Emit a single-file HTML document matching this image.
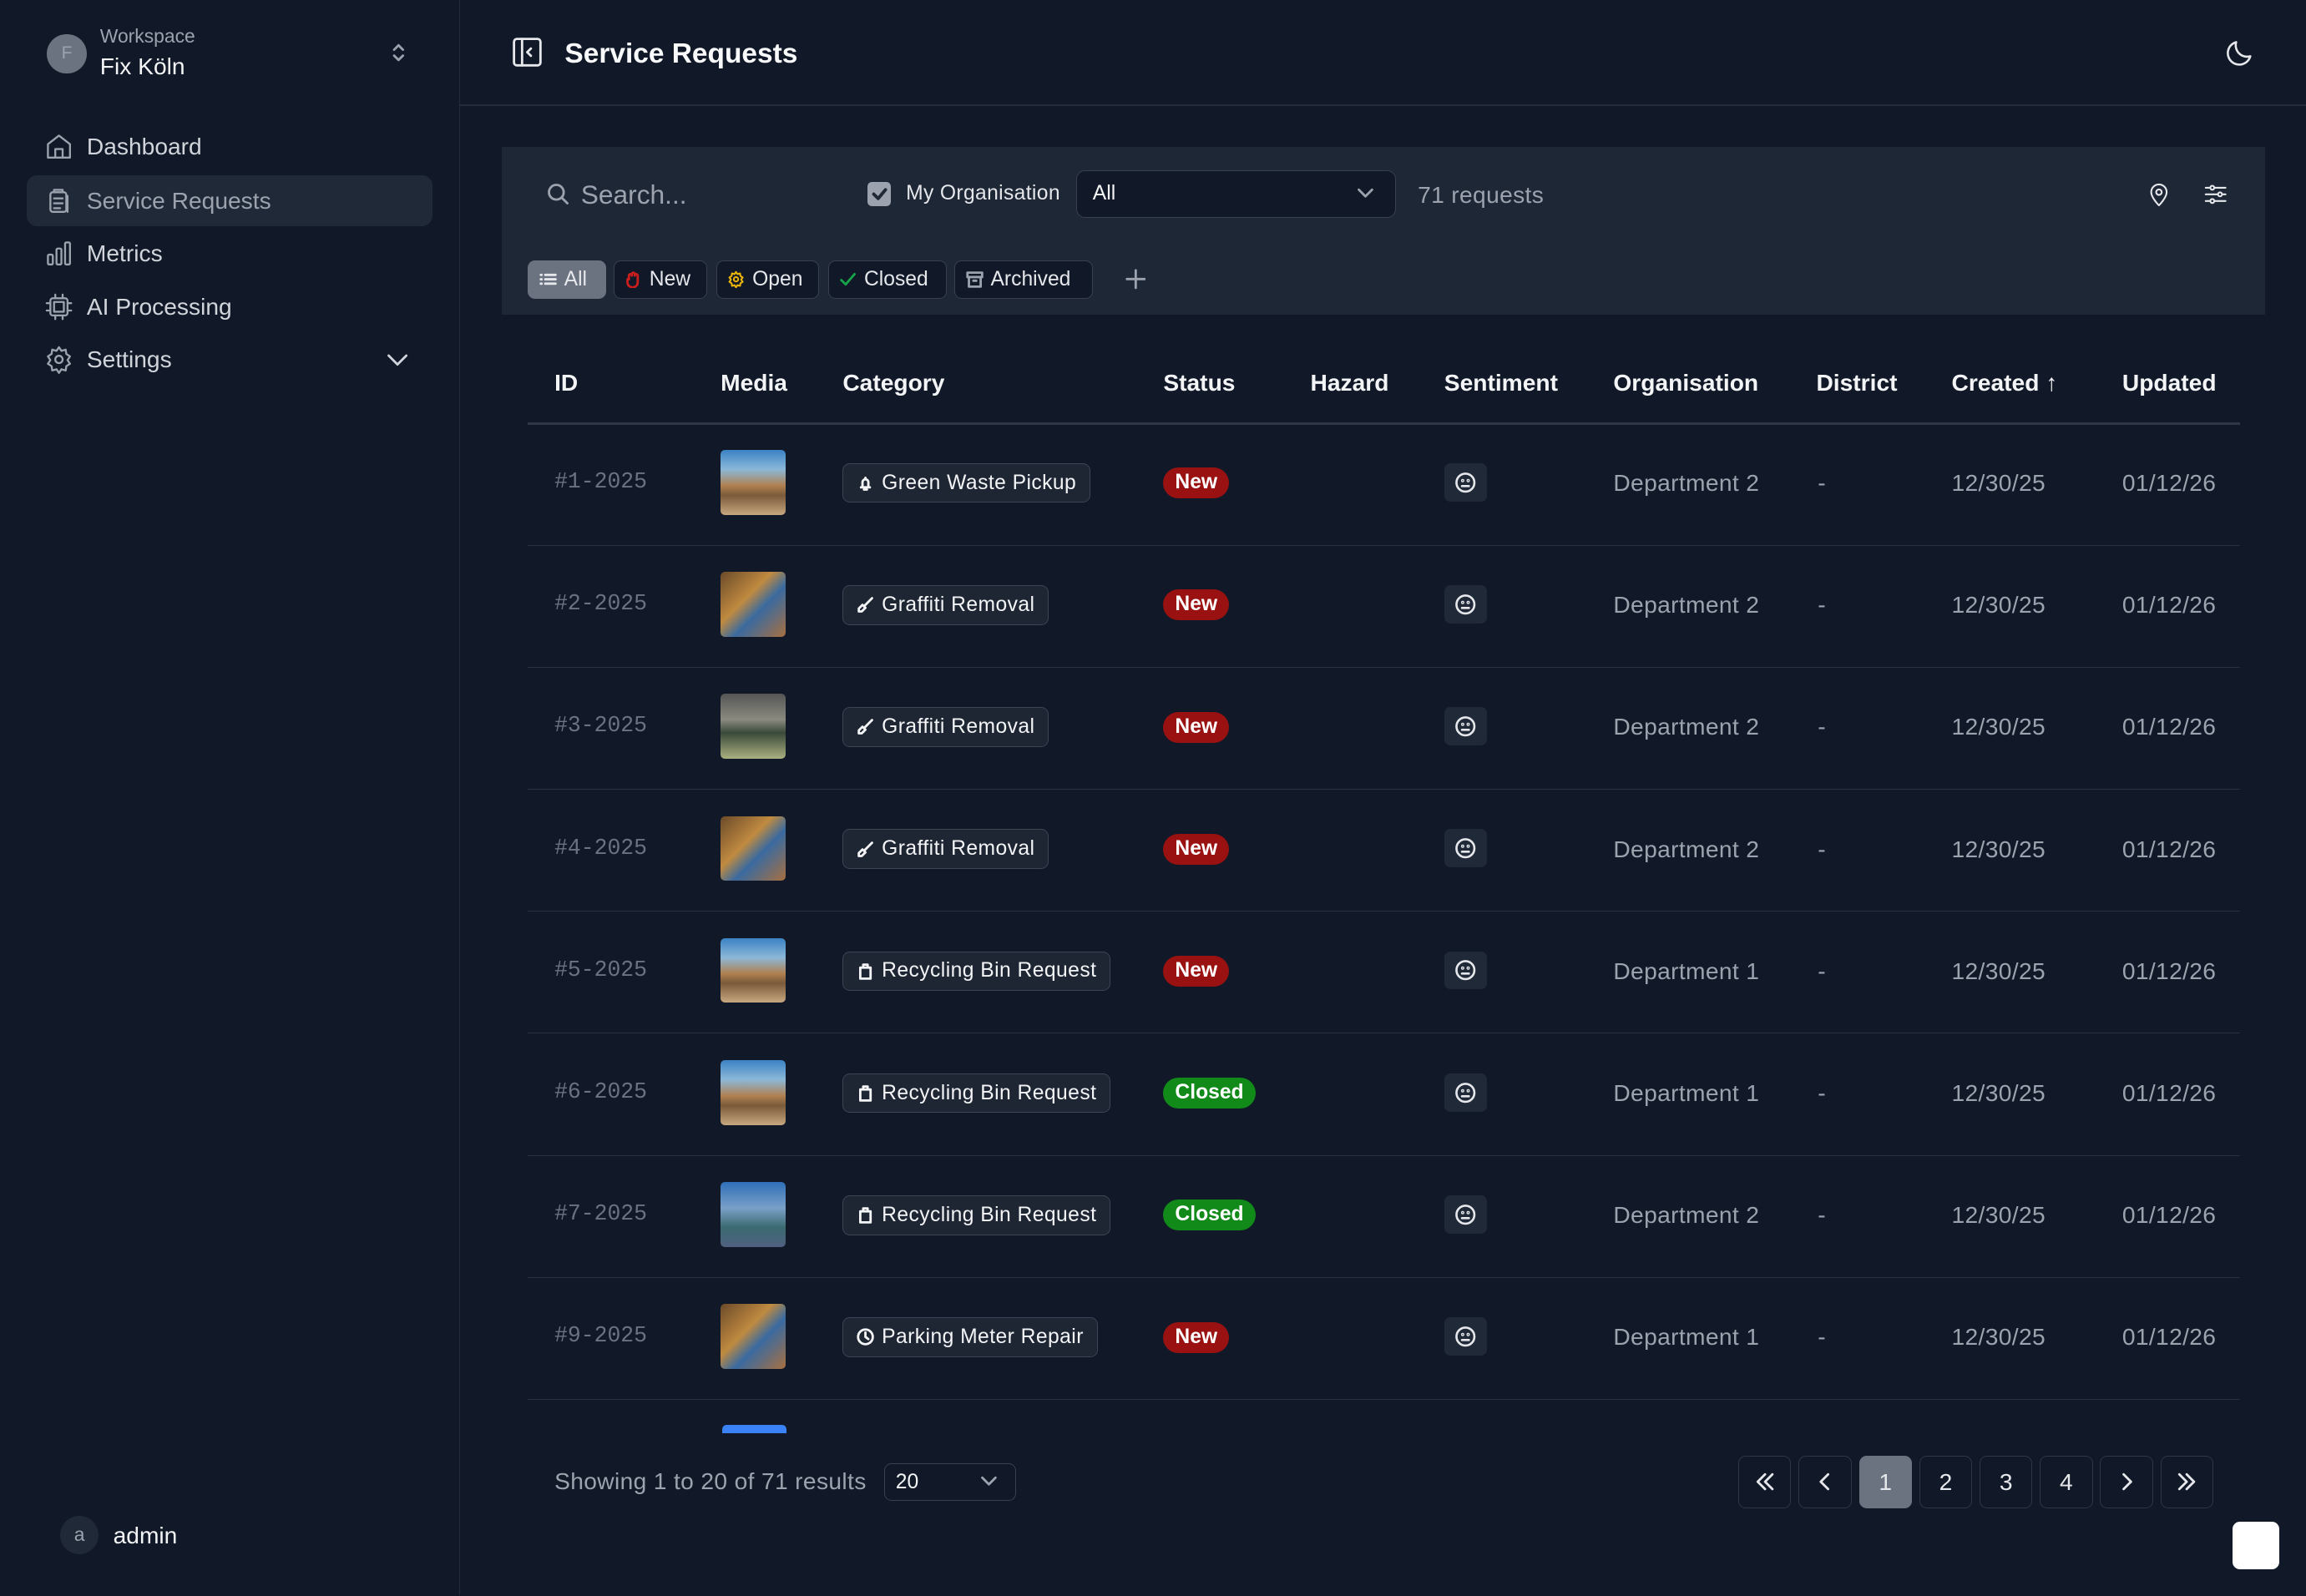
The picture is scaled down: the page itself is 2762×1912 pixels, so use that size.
<!DOCTYPE html>
<html><head><meta charset="utf-8"><style>
*{box-sizing:border-box;margin:0;padding:0}
html,body{width:2762px;height:1912px;overflow:hidden;background:#111827}
#w{zoom:1.7615;width:1568px;height:1085px;position:relative;font-family:"Liberation Sans",sans-serif;color:#e5e7eb;background:#111827}
.a{position:absolute}
svg{fill:none;stroke:currentColor;stroke-width:1.6;stroke-linecap:round;stroke-linejoin:round}
.nav{position:absolute;left:18px;width:276px;height:35px;display:flex;align-items:center;padding-left:12px;font-size:16px;color:#d1d5db}
.nav svg{width:20px;height:20px;margin-right:9px;color:#9ca3af}
.th{position:absolute;top:251px;font-size:16px;font-weight:bold;color:#f3f4f6}
.chip{position:absolute;top:177px;height:26px;border:1px solid #374151;background:#111827;border-radius:5px;font-size:14px;display:flex;align-items:center;padding:0 8px 0 7px;color:#e5e7eb}
.chip svg{width:12px;height:12px;margin-right:5px}
.row{position:absolute;left:359px;width:1164px;height:83px;border-bottom:1px solid #273142}
.row>*{position:absolute}
.id{left:18px;top:31px;font-family:"Liberation Mono",monospace;font-size:15px;color:#6b7280}
.th2{left:131px;top:18px;width:44px;height:44px;border-radius:3px}
.cat{left:214px;top:27px;height:27px;border:1px solid #3b4556;background:#1e2533;border-radius:5px;font-size:14px;letter-spacing:0.25px;display:flex;align-items:center;padding:0 9px 0 9px;color:#f3f4f6}
.cat svg{width:12px;height:12px;margin-right:5px}
.st{left:432px;top:30px;height:21px;border-radius:11px;font-size:14px;font-weight:bold;color:#fff;padding:0 8px;line-height:21px}
.new{background:#991111}.cl{background:#118a1a}
.se{left:623px;top:27px;width:29px;height:26px;background:#1f2937;border-radius:4px;display:flex;align-items:center;justify-content:center}
.se svg{width:15px;height:15px;color:#e5e7eb}
.txt{top:31px;font-size:16px;color:#9ca3af;letter-spacing:0.2px}
.pg{position:absolute;top:990px;width:36px;height:36px;border:1px solid #2d3748;border-radius:5px;display:flex;align-items:center;justify-content:center;font-size:16px;color:#e5e7eb}
.pg svg{width:16px;height:16px}
</style></head><body><div id="w">
<div class="a" style="left:0;top:0;width:313px;height:1085px;border-right:1px solid #232c3b;background:#111827"></div>
<div class="a" style="left:32px;top:23px;width:27px;height:27px;border-radius:50%;background:#6b7280;color:#9ca3af;font-size:12px;display:flex;align-items:center;justify-content:center">F</div>
<div class="a" style="left:68px;top:17px;font-size:13px;color:#9ca3af">Workspace</div>
<div class="a" style="left:68px;top:36px;font-size:16px;color:#f3f4f6">Fix Köln</div>
<svg class="a" style="left:264px;top:28px;width:14px;height:16px;color:#9ca3af" viewBox="0 0 14 16"><path d="M4 6l3-3 3 3M4 10l3 3 3-3"/></svg>
<div class="nav" style="top:82px"><svg viewBox="0 0 24 24"><path d="M3 10l9-7 9 7v11H3z"/><path d="M9 21v-7h6v7"/></svg>Dashboard</div>
<div class="nav" style="top:119px;background:#1f2937;border-radius:7px;color:#9ca3af"><svg viewBox="0 0 24 24"><rect x="5" y="5" width="13" height="16" rx="2"/><path d="M8 5V3h7v2M8 10h7M8 14h7M8 18h5"/><path d="M18 8h1v13"/></svg>Service Requests</div>
<div class="nav" style="top:155px"><svg viewBox="0 0 24 24"><rect x="3" y="13" width="4" height="8" rx="1"/><rect x="10" y="8" width="4" height="13" rx="1"/><rect x="17" y="3" width="4" height="18" rx="1"/></svg>Metrics</div>
<div class="nav" style="top:191px"><svg viewBox="0 0 24 24"><rect x="5" y="5" width="14" height="14" rx="2"/><rect x="8" y="8" width="8" height="8"/><path d="M9 2v3M15 2v3M9 19v3M15 19v3M2 9h3M2 15h3M19 9h3M19 15h3"/></svg>AI Processing</div>
<div class="nav" style="top:227px"><svg viewBox="0 0 24 24"><circle cx="12" cy="12" r="3"/><path d="M12 2l2 3 3.5-1 .5 3.5 3 2-2 3 2 3-3 2-.5 3.5-3.5-1-2 3-2-3-3.5 1-.5-3.5-3-2 2-3-2-3 3-2 .5-3.5 3.5 1z"/></svg>Settings</div>
<svg class="a" style="left:262px;top:238px;width:16px;height:14px;color:#d1d5db" viewBox="0 0 16 14"><path d="M2 4l6 6 6-6"/></svg>
<div class="a" style="left:41px;top:1031px;width:26px;height:26px;border-radius:50%;background:#1f2937;color:#9ca3af;font-size:13px;display:flex;align-items:center;justify-content:center">a</div>
<div class="a" style="left:77px;top:1035px;font-size:16px;color:#f3f4f6">admin</div>
<div class="a" style="left:313px;top:71px;width:1255px;height:1px;background:#232c3b"></div>
<svg class="a" style="left:348px;top:25px;width:21px;height:21px;color:#e5e7eb" viewBox="0 0 21 21"><rect x="1.5" y="1.5" width="18" height="18" rx="2"/><path d="M7 1.5v18M13 8l-2.5 2.5L13 13"/></svg>
<div class="a" style="left:384px;top:26px;font-size:19px;font-weight:bold;color:#f9fafb">Service Requests</div>
<svg class="a" style="left:1512px;top:25px;width:22px;height:22px;color:#e5e7eb" viewBox="0 0 24 24"><path d="M20 14.5A8.5 8.5 0 0 1 9.5 4a8.5 8.5 0 1 0 10.5 10.5z"/></svg>
<div class="a" style="left:341px;top:100px;width:1199px;height:114px;background:#1e2736"></div>
<svg class="a" style="left:371px;top:124px;width:16px;height:16px;color:#9ca3af" viewBox="0 0 16 16"><circle cx="7" cy="7" r="5"/><path d="M11 11l3.5 3.5"/></svg>
<div class="a" style="left:395px;top:122px;font-size:18px;color:#9ca3af">Search...</div>
<div class="a" style="left:590px;top:124px;width:16px;height:16px;border-radius:3px;background:#9ca3af"></div>
<svg class="a" style="left:592px;top:126px;width:12px;height:12px;color:#1f2937;stroke-width:2.2" viewBox="0 0 12 12"><path d="M2 6l3 3 5-6"/></svg>
<div class="a" style="left:616px;top:124px;font-size:14px;color:#e5e7eb;letter-spacing:0.2px">My Organisation</div>
<div class="a" style="left:732px;top:116px;width:217px;height:32px;border:1px solid #374151;background:#111827;border-radius:6px"></div>
<div class="a" style="left:743px;top:124px;font-size:14px;color:#f3f4f6">All</div>
<svg class="a" style="left:922px;top:126px;width:13px;height:11px;color:#9ca3af" viewBox="0 0 13 11"><path d="M2 3l4.5 4.5L11 3"/></svg>
<div class="a" style="left:964px;top:123px;font-size:16px;color:#9ca3af;letter-spacing:0.2px">71 requests</div>
<svg class="a" style="left:1459px;top:123px;width:18px;height:18px;color:#e5e7eb" viewBox="0 0 24 24"><path d="M12 22s7-7 7-12a7 7 0 0 0-14 0c0 5 7 12 7 12z"/><circle cx="12" cy="10" r="2.5"/></svg>
<svg class="a" style="left:1497px;top:123px;width:19px;height:18px;color:#e5e7eb" viewBox="0 0 24 24"><path d="M3 6h18M3 12h18M3 18h18"/><circle cx="9" cy="6" r="1.8" fill="#1e2736"/><circle cx="16" cy="12" r="1.8" fill="#1e2736"/><circle cx="9" cy="18" r="1.8" fill="#1e2736"/></svg>
<div class="chip" style="left:359px;width:53px;background:#6b7280;border-color:#6b7280"><svg viewBox="0 0 12 12"><path d="M4 3h7M4 6h7M4 9h7M1 3h.5M1 6h.5M1 9h.5"/></svg>All</div>
<div class="chip" style="left:417px;width:64px"><svg viewBox="0 0 12 12" style="color:#c81e1e"><path d="M3 6V3.5a1 1 0 0 1 2 0V2.5a1 1 0 0 1 2 0v1a1 1 0 0 1 2 0V8a3.5 3.5 0 0 1-7 0V6.5a1 1 0 0 1 1-1z"/></svg>New</div>
<div class="chip" style="left:487px;width:70px"><svg viewBox="0 0 24 24" style="color:#eab308;stroke-width:2.4"><circle cx="12" cy="12" r="3"/><path d="M12 2l2 3 3.5-1 .5 3.5 3 2-2 3 2 3-3 2-.5 3.5-3.5-1-2 3-2-3-3.5 1-.5-3.5-3-2 2-3-2-3 3-2 .5-3.5 3.5 1z"/></svg>Open</div>
<div class="chip" style="left:563px;width:81px"><svg viewBox="0 0 12 12" style="color:#16a34a"><path d="M1.5 6.5l3 3 6-7"/></svg>Closed</div>
<div class="chip" style="left:649px;width:94px"><svg viewBox="0 0 12 12" style="color:#9ca3af"><rect x="1" y="1.5" width="10" height="3"/><path d="M2 4.5V11h8V4.5M5 7h2"/></svg>Archived</div>
<svg class="a" style="left:765px;top:183px;width:14px;height:14px;color:#9ca3af" viewBox="0 0 14 14"><path d="M7 1v12M1 7h12"/></svg>
<div class="th" style="left:377px">ID</div>
<div class="th" style="left:490px">Media</div>
<div class="th" style="left:573px">Category</div>
<div class="th" style="left:791px">Status</div>
<div class="th" style="left:891px">Hazard</div>
<div class="th" style="left:982px">Sentiment</div>
<div class="th" style="left:1097px">Organisation</div>
<div class="th" style="left:1235px">District</div>
<div class="th" style="left:1327px">Created <span style="font-weight:normal">↑</span></div>
<div class="th" style="left:1443px">Updated</div>
<div class="a" style="left:359px;top:287px;width:1164px;height:2px;background:#2d3748"></div>
<div id="rows"></div>
<div class="a" style="left:491px;top:969px;width:44px;height:6px;background:#3b82f6;border-radius:3px 3px 0 0"></div>
<div class="a" style="left:377px;top:998px;font-size:16px;color:#9ca3af;letter-spacing:0.2px">Showing 1 to 20 of 71 results</div>
<div class="a" style="left:601px;top:995px;width:90px;height:26px;border:1px solid #374151;border-radius:5px"></div>
<div class="a" style="left:609px;top:1000px;font-size:14px;color:#f3f4f6">20</div>
<svg class="a" style="left:666px;top:1002px;width:13px;height:11px;color:#9ca3af" viewBox="0 0 13 11"><path d="M2 3l4.5 4.5L11 3"/></svg>
<div class="pg" style="left:1182px"><svg viewBox="0 0 16 16"><path d="M8 3L3 8l5 5M13 3L8 8l5 5"/></svg></div>
<div class="pg" style="left:1223px"><svg viewBox="0 0 16 16"><path d="M10 3L5 8l5 5"/></svg></div>
<div class="pg" style="left:1264px;background:#6b7280;border-color:#6b7280">1</div>
<div class="pg" style="left:1305px">2</div>
<div class="pg" style="left:1346px">3</div>
<div class="pg" style="left:1387px">4</div>
<div class="pg" style="left:1428px"><svg viewBox="0 0 16 16"><path d="M6 3l5 5-5 5"/></svg></div>
<div class="pg" style="left:1469px"><svg viewBox="0 0 16 16"><path d="M3 3l5 5-5 5M8 3l5 5-5 5"/></svg></div>
<div class="a" style="left:1518px;top:1035px;width:32px;height:32px;background:#fff;border-radius:5px"></div>
</div>
<script>
var bell='<path d="M3 9h6M4 9V5.5a2 2 0 0 1 4 0V9M6 2.5V3.5M5 10.5h2"/>';
var brush='<path d="M10.5 1.5L5 7M4 6l2 2-2.5 2.5H1.5V8.5z"/>';
var bin='<path d="M2.5 3.5h7V11h-7zM4.5 3.5V1.5h3v2"/>';
var clk='<circle cx="6" cy="6" r="5"/><path d="M6 3v3l2 1.5"/>';
var sky='linear-gradient(#3b82c4 0,#8bb8d8 30%,#b08050 55%,#7a5a3a 70%,#c8a880 100%)';
var org='linear-gradient(135deg,#6b4a2a,#c08a40 40%,#3a6aa0 60%,#a87040)';
var gry='linear-gradient(#555 0,#8a8a80 40%,#3a4a3a 60%,#aab080 100%)';
var blu='linear-gradient(#2f6fb8,#7aa0c8 40%,#3a6a70 70%,#506080)';
var d=[["#1-2025",sky,bell,"Green Waste Pickup","New","Department 2"],
["#2-2025",org,brush,"Graffiti Removal","New","Department 2"],
["#3-2025",gry,brush,"Graffiti Removal","New","Department 2"],
["#4-2025",org,brush,"Graffiti Removal","New","Department 2"],
["#5-2025",sky,bin,"Recycling Bin Request","New","Department 1"],
["#6-2025",sky,bin,"Recycling Bin Request","Closed","Department 1"],
["#7-2025",blu,bin,"Recycling Bin Request","Closed","Department 2"],
["#9-2025",org,clk,"Parking Meter Repair","New","Department 1"]];
var h='';
d.forEach(function(r,i){
h+='<div class="row" style="top:'+(288+i*83)+'px"><div class="id">'+r[0]+'</div><div class="th2" style="background:'+r[1]+'"></div><div class="cat"><svg viewBox="0 0 12 12">'+r[2]+'</svg>'+r[3]+'</div><div class="st '+(r[4]=="New"?"new":"cl")+'">'+r[4]+'</div><div class="se"><svg viewBox="0 0 16 16"><circle cx="8" cy="8" r="6.5"/><path d="M5.5 10.5h5"/><circle cx="6" cy="6.5" r=".4"/><circle cx="10" cy="6.5" r=".4"/></svg></div><div class="txt" style="left:738px">'+r[5]+'</div><div class="txt" style="left:877px">-</div><div class="txt" style="left:968px">12/30/25</div><div class="txt" style="left:1084px">01/12/26</div></div>';
});
document.getElementById('rows').innerHTML=h;
</script>
</body></html>
